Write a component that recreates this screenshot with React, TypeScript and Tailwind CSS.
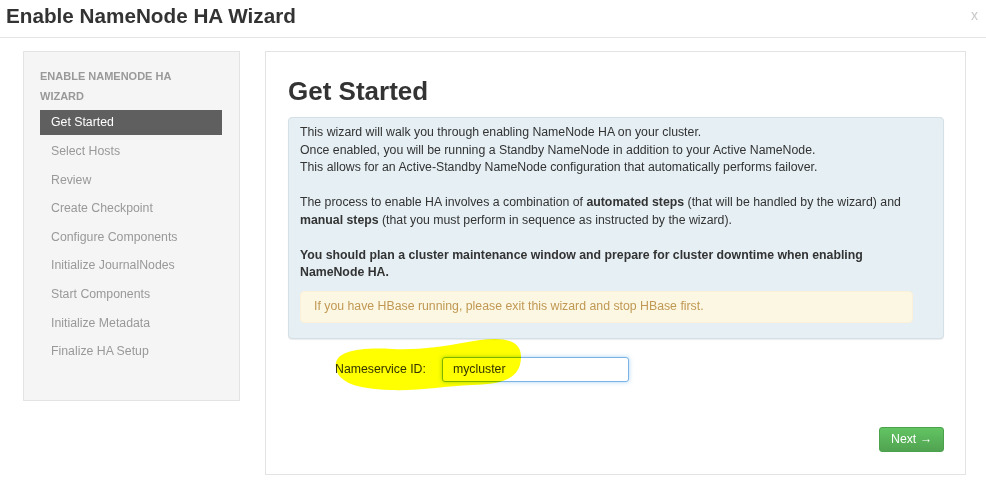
import { ReactNode } from 'react';

const steps = [
  'Get Started',
  'Select Hosts',
  'Review',
  'Create Checkpoint',
  'Configure Components',
  'Initialize JournalNodes',
  'Start Components',
  'Initialize Metadata',
  'Finalize HA Setup',
];

function Para({ children, last }: { children: ReactNode; last?: boolean }) {
  return <p className={last ? 'mb-[9px]' : 'mb-[17.5px]'}>{children}</p>;
}

export default function App() {
  return (
    <div className="relative w-[986px] h-[488px] bg-white overflow-hidden font-['Liberation_Sans',Arial,sans-serif] text-[#333]">
      {/* Header */}
      <div className="h-[38px] border-b border-[#e5e5e5] flex items-center justify-between pl-[6px] pr-[8px]">
        <h3 className="text-[20.7px] font-bold leading-none text-[#333] -mt-[4px]">Enable NameNode HA Wizard</h3>
        <span className="text-[14px] text-[#c8c8c8] -mt-[6px]">x</span>
      </div>

      <div className="flex gap-[25px] pl-[23px] pt-[13px]">
        {/* Sidebar */}
        <div className="w-[217px] h-[350px] shrink-0 bg-[#f5f5f5] border border-[#e3e3e3] pl-[16px] pr-[17px] pt-[14px]">
          <div className="text-[11px] font-bold leading-[20px] uppercase text-[#999] mb-[4px]">
            Enable NameNode HA
            <br />
            Wizard
          </div>
          <div className="flex flex-col gap-[3.625px]">
            {steps.map((s, i) => (
              <div
                key={s}
                className={`h-[25px] pl-[11px] flex items-center text-[12.3px] ${
                  i === 0 ? 'bg-[#5f5f5f] text-white' : 'text-[#999]'
                }`}
              >
                {s}
              </div>
            ))}
          </div>
        </div>

        {/* Main panel */}
        <div className="w-[701px] h-[424px] shrink-0 border border-[#e3e3e3] px-[22px] pt-[24px]">
          <h2 className="text-[26px] font-bold leading-[30px] text-[#333] mb-[11px]">Get Started</h2>

          <div className="w-[656px] bg-[#e5eff4] border border-[#d3e0e7] rounded-[4px] shadow-[0_1px_1px_rgba(0,0,0,0.08)] pl-[11px] pr-[11px] pt-[6px] pb-[15px] text-[12.3px] leading-[17.5px] text-[#333]">
            <Para>
              This wizard will walk you through enabling NameNode HA on your cluster.
              <br />
              Once enabled, you will be running a Standby NameNode in addition to your Active NameNode.
              <br />
              This allows for an Active-Standby NameNode configuration that automatically performs failover.
            </Para>
            <Para>
              The process to enable HA involves a combination of <b>automated steps</b> (that will be handled by the
              wizard) and <b>manual steps</b> (that you must perform in sequence as instructed by the wizard).
            </Para>
            <Para last>
              <b>
                You should plan a cluster maintenance window and prepare for cluster downtime when enabling
                <br />
                NameNode HA.
              </b>
            </Para>
            <div className="mr-[19px] h-[32px] flex items-center pl-[13px] bg-[#fcf7e3] border border-[#fbf0d8] rounded-[4px] text-[#c09853]">
              If you have HBase running, please exit this wizard and stop HBase first.
            </div>
          </div>

          <div className="flex items-center mt-[18px] pl-[47px] gap-[16px]">
            <label className="text-[12.3px] text-[#333]">Nameservice ID:</label>
            <div className="w-[187px] h-[25px] border border-[#7cb3e6] rounded-[3px] shadow-[0_0_4px_rgba(82,168,236,0.5)] bg-white flex items-center pl-[10px] text-[12.3px] text-[#333]">
              mycluster
            </div>
          </div>

          <div className="flex justify-end w-[656px] mt-[45px]">
            <button className="h-[25px] px-[11px] rounded-[3px] border border-[#4aa24a] bg-gradient-to-b from-[#62c462] to-[#51a351] text-white text-[12.3px]">
              Next →
            </button>
          </div>
        </div>
      </div>

      {/* Yellow highlighter mark */}
      <svg className="absolute left-0 top-0 pointer-events-none mix-blend-multiply" width="986" height="488">
        <path
          d="M336 368 C333 352 356 347 392 349 C420 350 440 347 468 342 C500 336 522 338 521 358 C520 376 508 384 472 385 C444 386 420 391 390 390 C356 389 338 382 336 368 Z"
          fill="#ffff00"
        />
      </svg>
    </div>
  );
}
